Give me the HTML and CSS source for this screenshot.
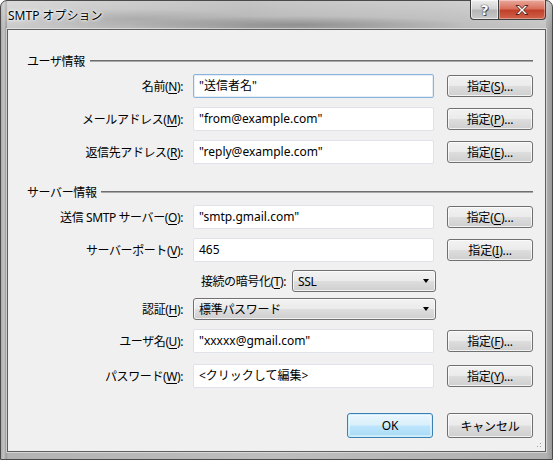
FILE: index.html
```html
<!DOCTYPE html>
<html lang="ja">
<head>
<meta charset="utf-8">
<title>SMTP オプション</title>
<link rel="stylesheet" href="styles.css">
</head>
<body>
<div class="window">
  <div class="titlebar">
    <span class="title">SMTP オプション</span>
    <div class="caption">
      <span class="cap-help">?</span>
      <span class="cap-close"><svg width="16" height="12" viewBox="0 0 16 12"><path d="M2 1.5h3.2L8 4.6l2.8-3.1H14l-4.4 4.5L14 10.5h-3.2L8 7.4l-2.8 3.1H2l4.4-4.5z" fill="#fff" stroke="#5a1f18" stroke-width="1"/></svg></span>
    </div>
  </div>
  <div class="client">
    <div class="group-head g1"><span>ユーザ情報</span><i class="rule"></i></div>

    <div class="row r1">
      <span class="lbl">名前(<u>N</u>):</span>
      <div class="field focused">"送信者名"</div>
      <span class="btn">指定(<u>S</u>)...</span>
    </div>
    <div class="row r2">
      <span class="lbl">メールアドレス(<u>M</u>):</span>
      <div class="field">"from@example.com"</div>
      <span class="btn">指定(<u>P</u>)...</span>
    </div>
    <div class="row r3">
      <span class="lbl">返信先アドレス(<u>R</u>):</span>
      <div class="field">"reply@example.com"</div>
      <span class="btn">指定(<u>E</u>)...</span>
    </div>

    <div class="group-head g2"><span>サーバー情報</span><i class="rule"></i></div>

    <div class="row r4">
      <span class="lbl">送信 SMTP サーバー(<u>O</u>):</span>
      <div class="field">"smtp.gmail.com"</div>
      <span class="btn">指定(<u>C</u>)...</span>
    </div>
    <div class="row r5">
      <span class="lbl">サーバーポート(<u>V</u>):</span>
      <div class="field">465</div>
      <span class="btn">指定(<u>I</u>)...</span>
    </div>
    <div class="row r6 short">
      <span class="lbl"></span>
      <div class="combo-wrap">
        <span class="sublbl">接続の暗号化(<u>T</u>):</span>
        <div class="select narrow"><span>SSL</span><i class="arrow"></i></div>
      </div>
    </div>
    <div class="row r7 short">
      <span class="lbl">認証(<u>H</u>):</span>
      <div class="select wide"><span>標準パスワード</span><i class="arrow"></i></div>
    </div>
    <div class="row r8">
      <span class="lbl">ユーザ名(<u>U</u>):</span>
      <div class="field">"xxxxx@gmail.com"</div>
      <span class="btn">指定(<u>F</u>)...</span>
    </div>
    <div class="row r9">
      <span class="lbl">パスワード(<u>W</u>):</span>
      <div class="field">&lt;クリックして編集&gt;</div>
      <span class="btn">指定(<u>Y</u>)...</span>
    </div>

    <div class="footer">
      <span class="btn big default">OK</span>
      <span class="btn big">キャンセル</span>
    </div>
    <i class="grip"></i>
  </div>
</div>
</body>
</html>
```
FILE: styles.css
```css
* { box-sizing: border-box; }
html, body { margin: 0; padding: 0; }
body {
  width: 553px;
  height: 460px;
  overflow: hidden;
  background: #fff;
  font-family: "Noto Sans", "Noto Sans CJK JP", sans-serif;
  font-size: 12px;
  color: #000;
}
u { text-decoration: underline; text-underline-offset: 2px; }

.window {
  width: 553px;
  height: 460px;
  border: 1px solid #4a4a4a;
  border-radius: 7px 7px 0 0;
  background:
    linear-gradient(180deg, rgba(255,255,255,0.3) 0, rgba(255,255,255,0) 28px),
    linear-gradient(90deg, #adadad 0, #c4c4c4 3px, #9c9c9c 5px, #b3b3b3 7px, #bdbdbd 50%, #b0b0b0 99%, #9a9a9a 100%);
  padding: 0 6px 7px 6px;
  display: flex;
  flex-direction: column;
  position: relative;
}

.titlebar {
  height: 28px;
  display: flex;
  align-items: center;
  position: relative;
  background:
    radial-gradient(ellipse 170px 9px at 290px 24px, rgba(70,70,70,0.35), rgba(70,70,70,0) 100%),
    radial-gradient(ellipse 120px 10px at 130px 18px, rgba(90,90,90,0.2), rgba(90,90,90,0) 100%),
    linear-gradient(90deg, rgba(255,255,255,0.3) 0, rgba(255,255,255,0.05) 20%, rgba(60,60,60,0.08) 45%, rgba(255,255,255,0.05) 80%, rgba(255,255,255,0.25) 100%);
}
.title {
  padding-left: 1px;
  margin-top: -1px;
  font-size: 12px;
  color: #000;
  text-shadow: 0 0 6px #fff, 0 0 3px #fff, 0 0 2px #fff;
}
.caption {
  position: absolute;
  top: -1px;
  right: 0;
  display: flex;
}
.cap-help, .cap-close {
  height: 20px;
  border: 1px solid #3f3f3f;
  border-top: none;
  display: flex;
  align-items: center;
  justify-content: center;
}
.cap-help {
  width: 28px;
  border-right: none;
  border-radius: 0 0 0 4px;
  background: linear-gradient(180deg, #eeeeee 0, #d2d2d2 45%, #b6b6b6 55%, #c9c9c9 100%);
  box-shadow: inset 0 0 0 1px rgba(255,255,255,0.6);
  font-weight: bold;
  font-size: 14px;
  color: #fff;
  text-shadow: 0 0 1px #333, 0 0 1px #333, 1px 1px 0 #555;
  font-family: "DejaVu Sans", sans-serif;
}
.cap-close {
  width: 48px;
  border-radius: 0 0 4px 0;
  background: linear-gradient(180deg, #e9a99c 0, #d8705c 45%, #c0402a 55%, #d2624a 100%);
  box-shadow: inset 0 0 0 1px rgba(255,255,255,0.35);
}

.client {
  flex: 1;
  background: #f0f0f0;
  border: 1px solid #5e5e5e;
  box-shadow: 0 0 0 1px rgba(255,255,255,0.45);
  position: relative;
  display: flex;
  flex-direction: column;
}

.group-head {
  display: flex;
  align-items: center;
  height: 16px;
  padding-left: 19px;
  padding-right: 12px;
}
.group-head span { white-space: nowrap; letter-spacing: -0.4px; }
.group-head .rule {
  flex: 1;
  height: 2px;
  margin-left: 5px;
  border-top: 1px solid #6e6e6e;
  border-bottom: 1px solid #a8a8a8;
}
.g1 { margin-top: 23px; }
.g2 { margin-top: 20px; }

.row {
  display: flex;
  align-items: center;
  height: 24px;
}
.row.short { height: 22px; }
.r1 { margin-top: 5px; }
.r2 { margin-top: 9px; }
.r3 { margin-top: 9px; }
.r4 { margin-top: 5px; }
.r5 { margin-top: 9px; }
.r6 { margin-top: 8px; }
.r7 { margin-top: 6px; }
.r8 { margin-top: 9px; }
.r9 { margin-top: 11px; }

.lbl {
  width: 175px;
  text-align: right;
  white-space: nowrap;
  letter-spacing: -0.4px;
}
.field {
  width: 241px;
  height: 24px;
  margin-left: 10px;
  background: #fff;
  border: 1px solid #dfe2e7;
  border-radius: 2px;
  padding: 0 5px;
  line-height: 22px;
  white-space: nowrap;
  overflow: hidden;
}
.field.focused {
  border-color: #8ab4dc;
  box-shadow: inset 0 0 0 1px #e4eef8;
}

.btn {
  width: 86px;
  height: 22px;
  margin-left: 13px;
  border: 1px solid #707070;
  border-radius: 3px;
  background: linear-gradient(180deg, #f2f2f2 0, #ebebeb 48%, #dddddd 52%, #cfcfcf 100%);
  box-shadow: inset 0 0 0 1px rgba(255,255,255,0.7);
  display: flex;
  align-items: center;
  justify-content: center;
  white-space: nowrap;
  letter-spacing: -0.2px;
}

.combo-wrap {
  width: 243px;
  margin-left: 10px;
  display: flex;
  align-items: center;
}
.sublbl {
  flex: 1;
  text-align: right;
  white-space: nowrap;
  letter-spacing: -0.4px;
  padding-right: 6px;
}
.select {
  height: 22px;
  border: 1px solid #707070;
  border-radius: 3px;
  background: linear-gradient(180deg, #f2f2f2 0, #ebebeb 48%, #dddddd 52%, #cfcfcf 100%);
  box-shadow: inset 0 0 0 1px rgba(255,255,255,0.7);
  display: flex;
  align-items: center;
  padding: 0 0 0 5px;
  position: relative;
}
.select span { flex: 1; white-space: nowrap; letter-spacing: -0.3px; }
.select.narrow { width: 144px; }
.select.wide { width: 243px; margin-left: 10px; }
.select .arrow {
  width: 0;
  height: 0;
  border-left: 3.5px solid transparent;
  border-right: 3.5px solid transparent;
  border-top: 4px solid #000;
  margin-right: 6px;
}

.footer {
  display: flex;
  justify-content: flex-end;
  padding-right: 12px;
  margin-top: 25px;
}
.btn.big {
  height: 25px;
  margin-left: 14px;
}
.btn.default {
  border-color: #3c7fb1;
  background: linear-gradient(180deg, #eaf6fd 0, #d9f0fc 48%, #bee6fd 52%, #a7d9f5 100%);
  box-shadow: inset 0 0 0 1px #cdeefd, inset 0 0 0 2px rgba(255,255,255,0.4);
}

.grip {
  position: absolute;
  right: 2px;
  bottom: 2px;
  width: 10px;
  height: 10px;
  background:
    radial-gradient(circle, #a0a0a0 0.8px, transparent 1px) 0 0 / 3px 3px;
  clip-path: polygon(100% 0, 100% 100%, 0 100%);
}
```
